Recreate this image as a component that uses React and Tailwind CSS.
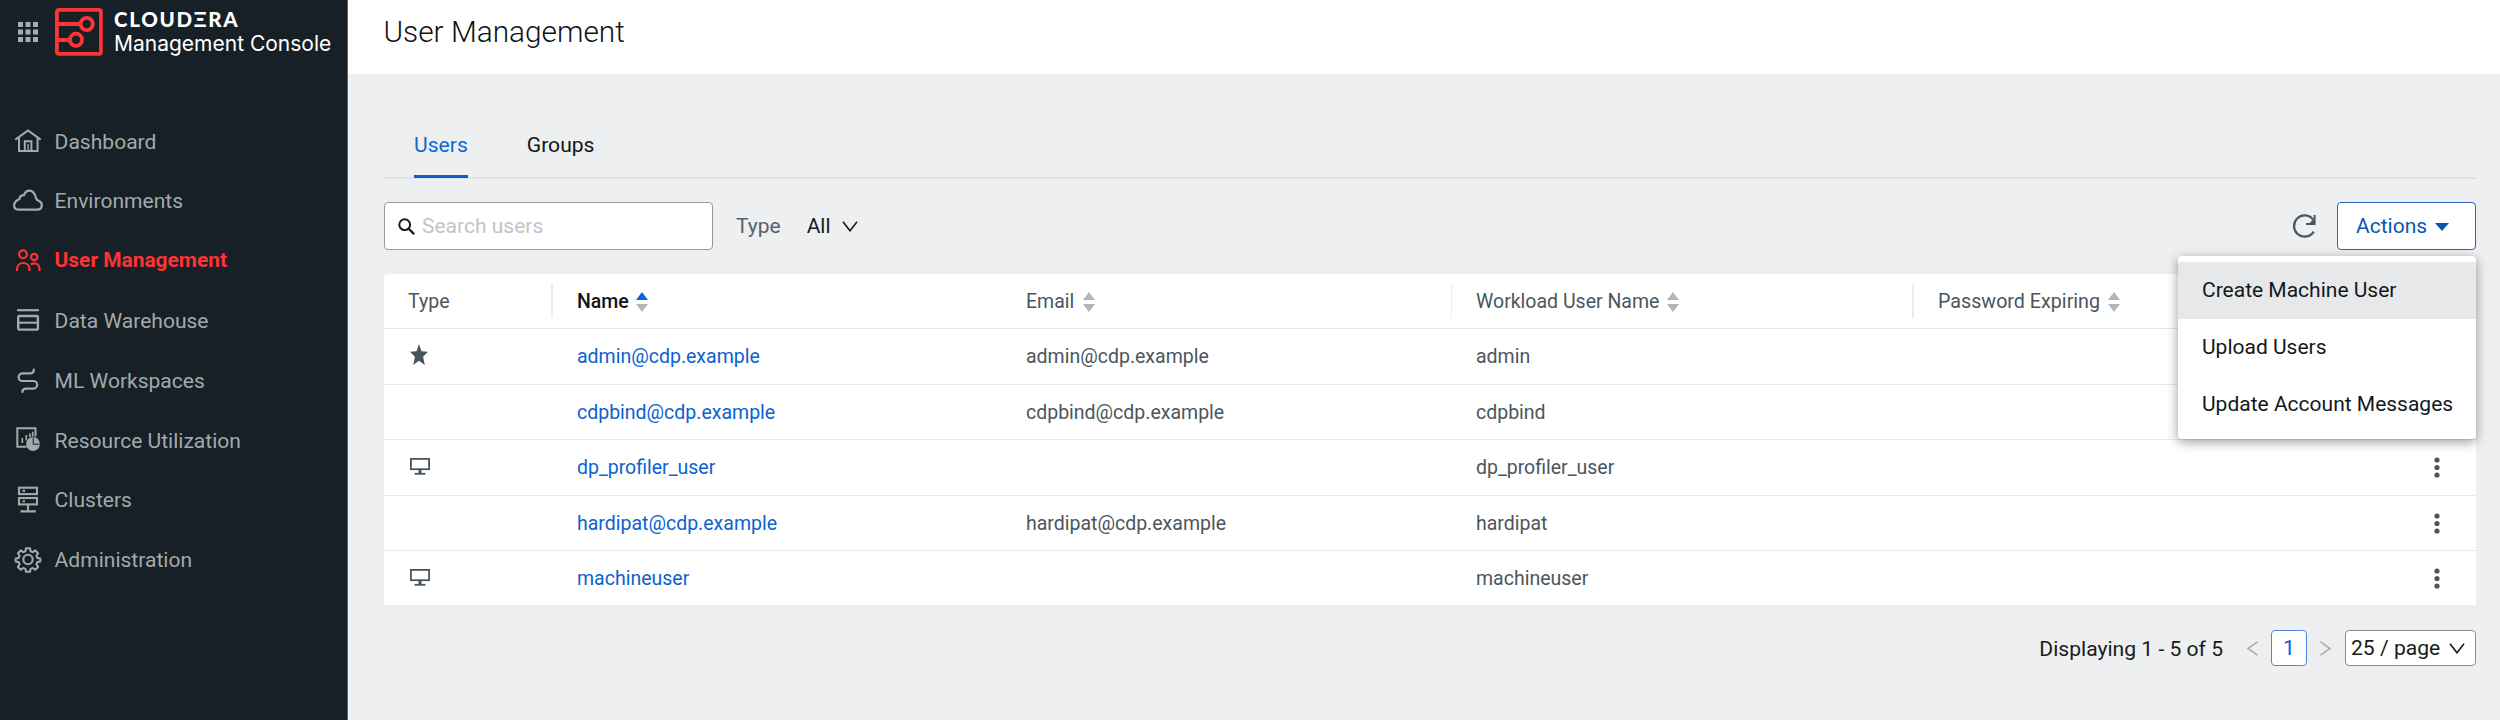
import React from "react";

/* ---------- sidebar icons ---------- */

const HomeIcon = () => (
  <svg className="h-7 w-7" viewBox="0 0 28 28" fill="none" stroke="currentColor" strokeWidth="2">
    <path d="M1.3 12.6 14 3.4l12.7 9.2" />
    <path d="M5 11v12.9h18.6V11" />
    <path d="M10.8 24v-9.8h6.6V24" />
    <path d="M14.1 17v7" strokeWidth="1.4" />
  </svg>
);

const CloudIcon = () => (
  <svg className="h-7 w-[30px]" viewBox="0 0 30 28" fill="none" stroke="currentColor" strokeWidth="2.2" strokeLinejoin="round">
    <path d="M6 22.7h18.4a4.5 4.5 0 0 0 1.5-8.7c-1.5-.7-2.3-.9-2.8-2.6C22 7 20 3.600 16.600 3.600c-3 0-4.800 2-5.500 4.600-2.300-.5-4.300 1.200-4.700 3.800C3 13.600 1.100 15.600 1.100 18.200c0 2.700 2 4.500 4.900 4.500Z" />
  </svg>
);

const UsersIcon = () => (
  <svg className="h-7 w-7" viewBox="0 0 28 28" fill="none" stroke="currentColor" strokeWidth="2.2">
    <circle cx="9" cy="7.3" r="3.900" />
    <circle cx="20.2" cy="10" r="3.200" />
    <path d="M3 24v-1.800c0-3.600 2.600-6.200 6.200-6.200s6.200 2.600 6.200 6.200V24" />
    <path d="M16.800 17.600c1-.8 2.200-1.200 3.500-1.200 3.200 0 5.200 2.200 5.200 5.300V24" />
  </svg>
);

const WarehouseIcon = () => (
  <svg className="h-7 w-7" viewBox="0 0 28 28" fill="none" stroke="currentColor">
    <path d="M3 3.200h22" strokeWidth="2.2" />
    <rect x="4.2" y="9" width="19.7" height="13.6" rx="1" strokeWidth="2.4" />
    <path d="M4 15.700h20" strokeWidth="2.1" />
  </svg>
);

const WorkspacesIcon = () => (
  <svg className="h-7 w-7" viewBox="0 0 28 28" fill="none" stroke="currentColor" strokeWidth="2.2" strokeLinecap="round">
    <path d="M19.800 2.500c0 2.700-1.300 3.900-3.700 3.900H8.400a3.800 3.800 0 0 0 0 7.600h11a3.800 3.800 0 0 1 0 7.600h-7.400c-2.300 0-3.600 1-3.600 3.400" />
  </svg>
);

const ResourceIcon = () => (
  <svg className="h-7 w-7" viewBox="0 0 28 28" fill="none" stroke="currentColor">
    <path d="M12.500 20.700H3.300V2.200h18.200v8.300" strokeWidth="2" />
    <path d="M8.300 17v-5M12.300 14.500V9M15.900 11V7.500M18.700 10.500V5.800" strokeWidth="1.7" />
    <circle cx="19" cy="18" r="6.9" fill="currentColor" stroke="none" />
    <path d="M19.200 11.500v6.700h6.200" stroke="#162026" strokeWidth="1" />
  </svg>
);

const ClustersIcon = () => (
  <svg className="h-7 w-7" viewBox="0 0 28 28" fill="none" stroke="currentColor" strokeWidth="2.1">
    <rect x="5" y="1.7" width="18" height="6.4" />
    <rect x="5" y="12" width="18" height="6.4" />
    <path d="M14 18v7M6.500 25.400h15.300" />
    <path d="M8.600 4.900h2.400M8.600 15.200h2.400" />
  </svg>
);

const GearIcon = () => (
  <svg className="h-7 w-7" viewBox="0 0 28 28" fill="none" stroke="currentColor" strokeWidth="2.1" strokeLinejoin="round">
    <circle cx="14" cy="13.5" r="4.7" />
    <path d="M12 2.200h4l.6 3 2.200.9 2.500-1.700 2.800 2.800-1.700 2.500.9 2.200 3 .6v3l-3 .6-.9 2.300 1.700 2.500-2.800 2.800-2.500-1.700-2.200.9-.6 2.900h-4l-.6-2.900-2.200-.9-2.500 1.700-2.800-2.800 1.700-2.500-.9-2.300-3-.6v-3l3-.6.9-2.200-1.700-2.500 2.800-2.800 2.500 1.700 2.200-.9Z" />
  </svg>
);

/* ---------- page icons ---------- */

const Chevron = () => (
  <svg className="h-[11px] w-4" viewBox="0 0 16 11" fill="none" stroke="currentColor" strokeWidth="1.6">
    <path d="M1 .8 8 9.800 15 .8" />
  </svg>
);

const SortIcon = ({ active }) => (
  <svg className="mt-px h-5 w-3" viewBox="0 0 12 20">
    <path d="M6 0l6 8H0Z" className={active ? "fill-[#0b66d4]" : "fill-[#b3b5b8]"} />
    <path d="M6 20l6-8H0Z" className="fill-[#b3b5b8]" />
  </svg>
);

const StarIcon = () => (
  <svg className="mb-1 h-[22px] w-[18px]" viewBox="0 0 18 20" preserveAspectRatio="none" fill="currentColor">
    <path d="M9 0l2.500 6.600 6.500.4-4.900 4.700 1.700 7.300L9 15.200 3.200 19l1.700-7.300L0 7l6.500-.4Z" />
  </svg>
);

const MonitorIcon = () => (
  <svg className="-mt-0.5 h-[17px] w-5" viewBox="0 0 20 17" fill="none" stroke="currentColor" strokeWidth="1.8">
    <rect x=".9" y=".9" width="18.2" height="10.3" />
    <path d="M4.500 15.800h11" />
    <path d="M10 11v4.500" strokeWidth="3" />
  </svg>
);

const KebabIcon = () => (
  <svg className="h-[21px] w-[6px]" viewBox="0 0 6 21" fill="currentColor">
    <circle cx="3" cy="3" r="2.6" />
    <circle cx="3" cy="10.5" r="2.6" />
    <circle cx="3" cy="18" r="2.6" />
  </svg>
);

/* ---------- data ---------- */

const NAV = [
  ["Dashboard", HomeIcon],
  ["Environments", CloudIcon],
  ["User Management", UsersIcon],
  ["Data Warehouse", WarehouseIcon],
  ["ML Workspaces", WorkspacesIcon],
  ["Resource Utilization", ResourceIcon],
  ["Clusters", ClustersIcon],
  ["Administration", GearIcon],
];

const USERS = [
  { icon: StarIcon, name: "admin@cdp.example", email: "admin@cdp.example", workload: "admin" },
  { name: "cdpbind@cdp.example", email: "cdpbind@cdp.example", workload: "cdpbind" },
  { icon: MonitorIcon, name: "dp_profiler_user", email: "", workload: "dp_profiler_user" },
  { name: "hardipat@cdp.example", email: "hardipat@cdp.example", workload: "hardipat" },
  { icon: MonitorIcon, name: "machineuser", email: "", workload: "machineuser" },
];

const COLUMNS = "grid grid-cols-[167px_450px_450px_461px_1fr] items-center";

/* ---------- sections ---------- */

function Sidebar() {
  return (
    <aside className="flex w-[348px] shrink-0 flex-col border-r border-[#5b686d] bg-[#162026] text-[#a4a9ac]">
      <div className="flex h-16 items-start pt-2 pl-[18px]">
        <svg className="mt-[14px] h-5 w-5" viewBox="0 0 20 20" fill="#a9aeb0">
          {[0, 7.5, 15].map((y) => [0, 7.5, 15].map((x) => <rect key={`${x}-${y}`} x={x} y={y} width="5" height="5" />))}
        </svg>
        <svg className="ml-[17px] h-12 w-12" viewBox="0 0 48 48" fill="none" stroke="#fb3434" strokeWidth="3.8">
          <rect x="1.9" y="1.9" width="44" height="44" rx="2" />
          <path d="M3 16h23M3 32h11" />
          <circle cx="31.7" cy="16" r="6.1" />
          <circle cx="21" cy="31.8" r="6.1" />
        </svg>
        <div className="ml-[11px] flex flex-col text-white">
          <span className="mt-[1px] h-5 font-[Lato,sans-serif] text-[20.5px] leading-5 font-black tracking-[1.7px]">CLOUDΞRA</span>
          <span className="mt-px font-[Inter,sans-serif] text-[21px] leading-7 whitespace-nowrap">Management Console</span>
        </div>
      </div>
      <nav className="mt-[47.5px] flex flex-col">
        {NAV.map(([label, Icon]) => (
          <a
            key={label}
            className={
              label === "User Management"
                ? "flex h-[59.8px] items-center text-[20.9px] font-bold text-[#fb3434]"
                : "flex h-[59.8px] items-center text-[21.05px]"
            }
          >
            <span className="flex w-[54.6px] justify-center pl-px">
              <Icon />
            </span>
            {label}
          </a>
        ))}
      </nav>
    </aside>
  );
}

function Tabs() {
  return (
    <div className="flex h-[105px] items-end border-b-2 border-[#dfe0e2] pl-[30px] text-[21.1px]">
      <a className="-mb-[1px] flex h-[67px] items-center border-b-[3px] border-[#0b5fd3] pt-1 text-[#0f69d2]">Users</a>
      <a className="ml-[59px] flex h-[67px] items-center border-b-[3px] border-transparent pt-[5px] text-[#111619]">Groups</a>
    </div>
  );
}

function ActionsMenu() {
  return (
    <div className="absolute top-[54px] right-0 z-10 w-[298px] rounded-[4px] bg-white pt-[6px] pb-[6px] text-[21px] whitespace-nowrap text-[#12181c] shadow-[0_3px_12px_rgba(0,0,0,0.4)]">
      <div className="flex h-[57px] items-center bg-[#e7e8e9] pt-px pl-6">Create Machine User</div>
      <div className="flex h-[57px] items-center pt-px pl-6">Upload Users</div>
      <div className="flex h-[57px] items-center pt-px pl-6">Update Account Messages</div>
    </div>
  );
}

function Toolbar() {
  return (
    <div className="mt-[23px] flex h-12 items-center text-[21px]">
      <div className="flex h-12 w-[329px] items-center rounded-[4px] border border-[#96999c] bg-white pl-[13px]">
        <svg className="h-[17px] w-[17px] text-[#14191c]" viewBox="0 0 17 17" fill="none" stroke="currentColor" strokeWidth="2">
          <circle cx="6.7" cy="6.7" r="5.4" />
          <path d="M10.500 10.500l5.600 5.600" strokeWidth="2.3" />
        </svg>
        <span className="ml-[7px] pt-px text-[#c1c5c9]">Search users</span>
      </div>
      <span className="ml-[23px] pt-px text-[#57626a]">Type</span>
      <span className="ml-[26px] pt-px text-[#171c1f]">All</span>
      <span className="ml-[11px] text-[#171c1f]">
        <Chevron />
      </span>
      <div className="relative ml-auto flex items-center">
        <svg className="mr-[21px] h-6 w-6 text-[#4b5860]" viewBox="0 0 24 24" fill="none" stroke="currentColor" strokeWidth="2.3">
          <path d="M21.700 17.600A10.600 10.600 0 1 1 21 5.500" />
          <path d="M22.600 1v9h-8.600" strokeWidth="2" />
          <path d="M22.600 4v6h-6Z" fill="currentColor" stroke="none" />
        </svg>
        <button className="flex h-12 w-[139px] items-center rounded-[4px] border border-[#2e63b4] bg-white pt-px pl-[18px] text-[#0b56b3]">
          Actions
          <svg className="ml-2 h-2 w-[14px]" viewBox="0 0 14 8" fill="#0a55b0">
            <path d="M0 0h14L7 8Z" />
          </svg>
        </button>
        <ActionsMenu />
      </div>
    </div>
  );
}

function UsersTable() {
  return (
    <div className="mt-6 rounded-t-[4px] bg-white text-[19.5px] text-[#4a565e]">
      <div className={`${COLUMNS} h-[55px] border-b border-[#e4e6e8]`}>
        <div className="pt-[2px] pl-6">Type</div>
        <div className="flex h-[34px] items-center gap-[7px] border-l-2 border-[#ececee] pl-6 font-medium text-[#0f1417]">
          <span className="pt-[2px]">Name</span> <SortIcon active />
        </div>
        <div className="flex h-[34px] items-center gap-[9px] pl-[25px]">
          <span className="pt-[2px]">Email</span> <SortIcon />
        </div>
        <div className="flex h-[34px] items-center gap-2 border-l border-[#ececee] pl-6">
          <span className="pt-[2px]">Workload User Name</span> <SortIcon />
        </div>
        <div className="flex h-[34px] items-center gap-2 border-l-2 border-[#ececee] pl-6 text-[19.7px]">
          <span className="pt-[2px]">Password Expiring</span> <SortIcon />
        </div>
      </div>
      {USERS.map(({ icon: Icon, name, email, workload }) => (
        <div key={name} className={`${COLUMNS} h-[55.5px] border-b border-[#e8e9eb] pt-[1px] last:h-[54px] last:border-b-0`}>
          <div className="flex items-center pl-[26px]">{Icon && <Icon />}</div>
          <a className="pl-[26px] text-[#0b62d0]">{name}</a>
          <div className="pl-[25px]">{email}</div>
          <div className="pl-[25px]">{workload}</div>
          <div className="flex justify-end pr-9">
            <KebabIcon />
          </div>
        </div>
      ))}
    </div>
  );
}

function Pagination() {
  return (
    <div className="mt-[25px] flex h-9 items-center justify-end text-[21.1px] text-[#171c20]">
      <span className="pt-[2px]">Displaying 1 - 5 of 5</span>
      <svg className="ml-6 h-[15px] w-[11px]" viewBox="0 0 11 15" fill="none" stroke="#a9adb0" strokeWidth="1.6">
        <path d="M10.500.8 1 7.500l9.500 6.700" />
      </svg>
      <span className="ml-[13px] flex h-9 w-9 items-center justify-center rounded-[4px] border border-[#4f86dc] bg-white text-[#0b62d0]">1</span>
      <svg className="ml-[13px] h-[15px] w-[11px]" viewBox="0 0 11 15" fill="none" stroke="#a9adb0" strokeWidth="1.6">
        <path d="M.5.800 10 7.500.5 14.200" />
      </svg>
      <span className="ml-[14px] flex h-9 w-[131px] items-center justify-between rounded-[4px] border border-[#898c90] bg-white pr-[10px] pl-[5px]">
        25 / page <Chevron />
      </span>
    </div>
  );
}

export default function App() {
  return (
    <div className="flex h-[720px] w-[2500px] overflow-hidden bg-[#eeeff1] font-[Roboto,sans-serif]">
      <Sidebar />
      <main className="flex min-w-0 flex-1 flex-col">
        <header className="flex h-[74px] items-center bg-white pb-[9px] pl-[35.5px] text-[29.8px] font-light text-[#0f1316]">User Management</header>
        <div className="flex flex-col pr-6 pl-9">
          <Tabs />
          <Toolbar />
          <UsersTable />
          <Pagination />
        </div>
      </main>
    </div>
  );
}
